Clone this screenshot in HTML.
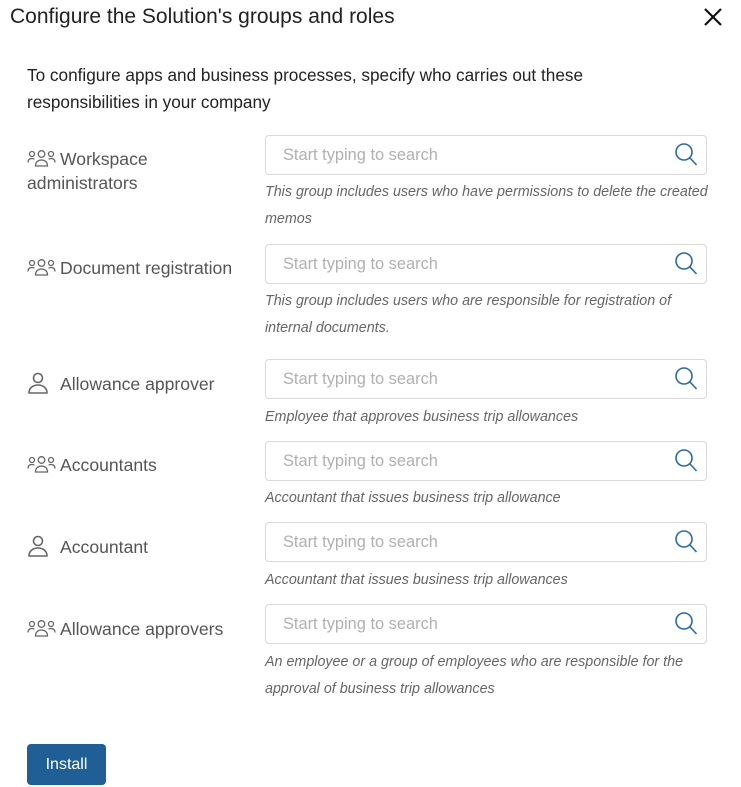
<!DOCTYPE html>
<html><head><style>
body{margin:0;width:741px;height:787px;background:#fff;font-family:"Liberation Sans",sans-serif;position:relative;overflow:hidden}
.a{position:absolute}
.title{left:10px;top:5px;font-size:21px;color:#222}
.intro{left:27px;top:62px;font-size:17.2px;line-height:27px;color:#222;width:620px}
.lab{left:27px;font-size:17.6px;color:#555;line-height:24px}
.lab svg{vertical-align:-4px;margin-right:4px}
.inp{left:265px;width:440px;height:38px;border:1px solid #d9d9d9;border-radius:4px}
.inp span{position:absolute;left:17px;top:10px;font-size:16.4px;color:#b0b0b0}
.inp svg{position:absolute;right:8px;top:6px}
.hint{left:265px;font-size:14.3px;font-style:italic;color:#666;line-height:27px;width:445px}
.btn{left:27px;top:744px;width:79px;height:41px;background:#1f5f95;border-radius:4px;color:#fff;font-size:16px;text-align:center;line-height:41px}
</style></head><body>
<div class="a title">Configure the Solution's groups and roles</div>
<svg class="a" style="left:703px;top:7px" width="20" height="20" viewBox="0 0 20 20"><path d="M2 2L18 18M18 2L2 18" stroke="#111" stroke-width="2.2"/></svg>
<div class="a intro">To configure apps and business processes, specify who carries out these responsibilities in your company</div>

<div class="a lab" style="top:147px"><svg width="29" height="20" viewBox="0 0 29 20" fill="none" stroke="#666" stroke-width="1.3"><circle cx="14.5" cy="5" r="3.3"/><path d="M8.5 17c0-4 2.7-6 6-6s6 2 6 6z"/><circle cx="5" cy="5" r="2.5"/><path d="M1 13.5c0-3 1.8-4 4-4 1 0 1.8.3 2.4.8"/><circle cx="24" cy="5" r="2.5"/><path d="M28 13.5c0-3-1.8-4-4-4-1 0-1.8.3-2.4.8"/></svg>Workspace<br>administrators</div>
<div class="a inp" style="top:135px"><span>Start typing to search</span><svg width="24" height="26" viewBox="0 0 24 26" fill="none" stroke="#2a6aa0" stroke-width="1.6"><circle cx="10" cy="10" r="8"/><path d="M16 16l6.5 7"/></svg></div>
<div class="a hint" style="top:179px">This group includes users who have permissions to delete the created memos</div>

<div class="a lab" style="top:256px"><svg width="29" height="20" viewBox="0 0 29 20" fill="none" stroke="#666" stroke-width="1.3"><circle cx="14.5" cy="5" r="3.3"/><path d="M8.5 17c0-4 2.7-6 6-6s6 2 6 6z"/><circle cx="5" cy="5" r="2.5"/><path d="M1 13.5c0-3 1.8-4 4-4 1 0 1.8.3 2.4.8"/><circle cx="24" cy="5" r="2.5"/><path d="M28 13.5c0-3-1.8-4-4-4-1 0-1.8.3-2.4.8"/></svg>Document registration</div>
<div class="a inp" style="top:244px"><span>Start typing to search</span><svg width="24" height="26" viewBox="0 0 24 26" fill="none" stroke="#2a6aa0" stroke-width="1.6"><circle cx="10" cy="10" r="8"/><path d="M16 16l6.5 7"/></svg></div>
<div class="a hint" style="top:288px">This group includes users who are responsible for registration of<br>internal documents.</div>

<div class="a lab" style="top:372px"><svg width="29" height="22" viewBox="0 0 29 22" fill="none" stroke="#666" stroke-width="1.6"><circle cx="11" cy="6" r="4.5"/><path d="M2 21c0-5 4-8 9-8s9 3 9 8z" stroke-linejoin="round"/></svg>Allowance approver</div>
<div class="a inp" style="top:359px"><span>Start typing to search</span><svg width="24" height="26" viewBox="0 0 24 26" fill="none" stroke="#2a6aa0" stroke-width="1.6"><circle cx="10" cy="10" r="8"/><path d="M16 16l6.5 7"/></svg></div>
<div class="a hint" style="top:404px">Employee that approves business trip allowances</div>

<div class="a lab" style="top:453px"><svg width="29" height="20" viewBox="0 0 29 20" fill="none" stroke="#666" stroke-width="1.3"><circle cx="14.5" cy="5" r="3.3"/><path d="M8.5 17c0-4 2.7-6 6-6s6 2 6 6z"/><circle cx="5" cy="5" r="2.5"/><path d="M1 13.5c0-3 1.8-4 4-4 1 0 1.8.3 2.4.8"/><circle cx="24" cy="5" r="2.5"/><path d="M28 13.5c0-3-1.8-4-4-4-1 0-1.8.3-2.4.8"/></svg>Accountants</div>
<div class="a inp" style="top:441px"><span>Start typing to search</span><svg width="24" height="26" viewBox="0 0 24 26" fill="none" stroke="#2a6aa0" stroke-width="1.6"><circle cx="10" cy="10" r="8"/><path d="M16 16l6.5 7"/></svg></div>
<div class="a hint" style="top:485px">Accountant that issues business trip allowance</div>

<div class="a lab" style="top:535px"><svg width="29" height="22" viewBox="0 0 29 22" fill="none" stroke="#666" stroke-width="1.6"><circle cx="11" cy="6" r="4.5"/><path d="M2 21c0-5 4-8 9-8s9 3 9 8z" stroke-linejoin="round"/></svg>Accountant</div>
<div class="a inp" style="top:522px"><span>Start typing to search</span><svg width="24" height="26" viewBox="0 0 24 26" fill="none" stroke="#2a6aa0" stroke-width="1.6"><circle cx="10" cy="10" r="8"/><path d="M16 16l6.5 7"/></svg></div>
<div class="a hint" style="top:567px">Accountant that issues business trip allowances</div>

<div class="a lab" style="top:617px"><svg width="29" height="20" viewBox="0 0 29 20" fill="none" stroke="#666" stroke-width="1.3"><circle cx="14.5" cy="5" r="3.3"/><path d="M8.5 17c0-4 2.7-6 6-6s6 2 6 6z"/><circle cx="5" cy="5" r="2.5"/><path d="M1 13.5c0-3 1.8-4 4-4 1 0 1.8.3 2.4.8"/><circle cx="24" cy="5" r="2.5"/><path d="M28 13.5c0-3-1.8-4-4-4-1 0-1.8.3-2.4.8"/></svg>Allowance approvers</div>
<div class="a inp" style="top:604px"><span>Start typing to search</span><svg width="24" height="26" viewBox="0 0 24 26" fill="none" stroke="#2a6aa0" stroke-width="1.6"><circle cx="10" cy="10" r="8"/><path d="M16 16l6.5 7"/></svg></div>
<div class="a hint" style="top:649px">An employee or a group of employees who are responsible for the<br>approval of business trip allowances</div>

<div class="a btn">Install</div>
</body></html>
